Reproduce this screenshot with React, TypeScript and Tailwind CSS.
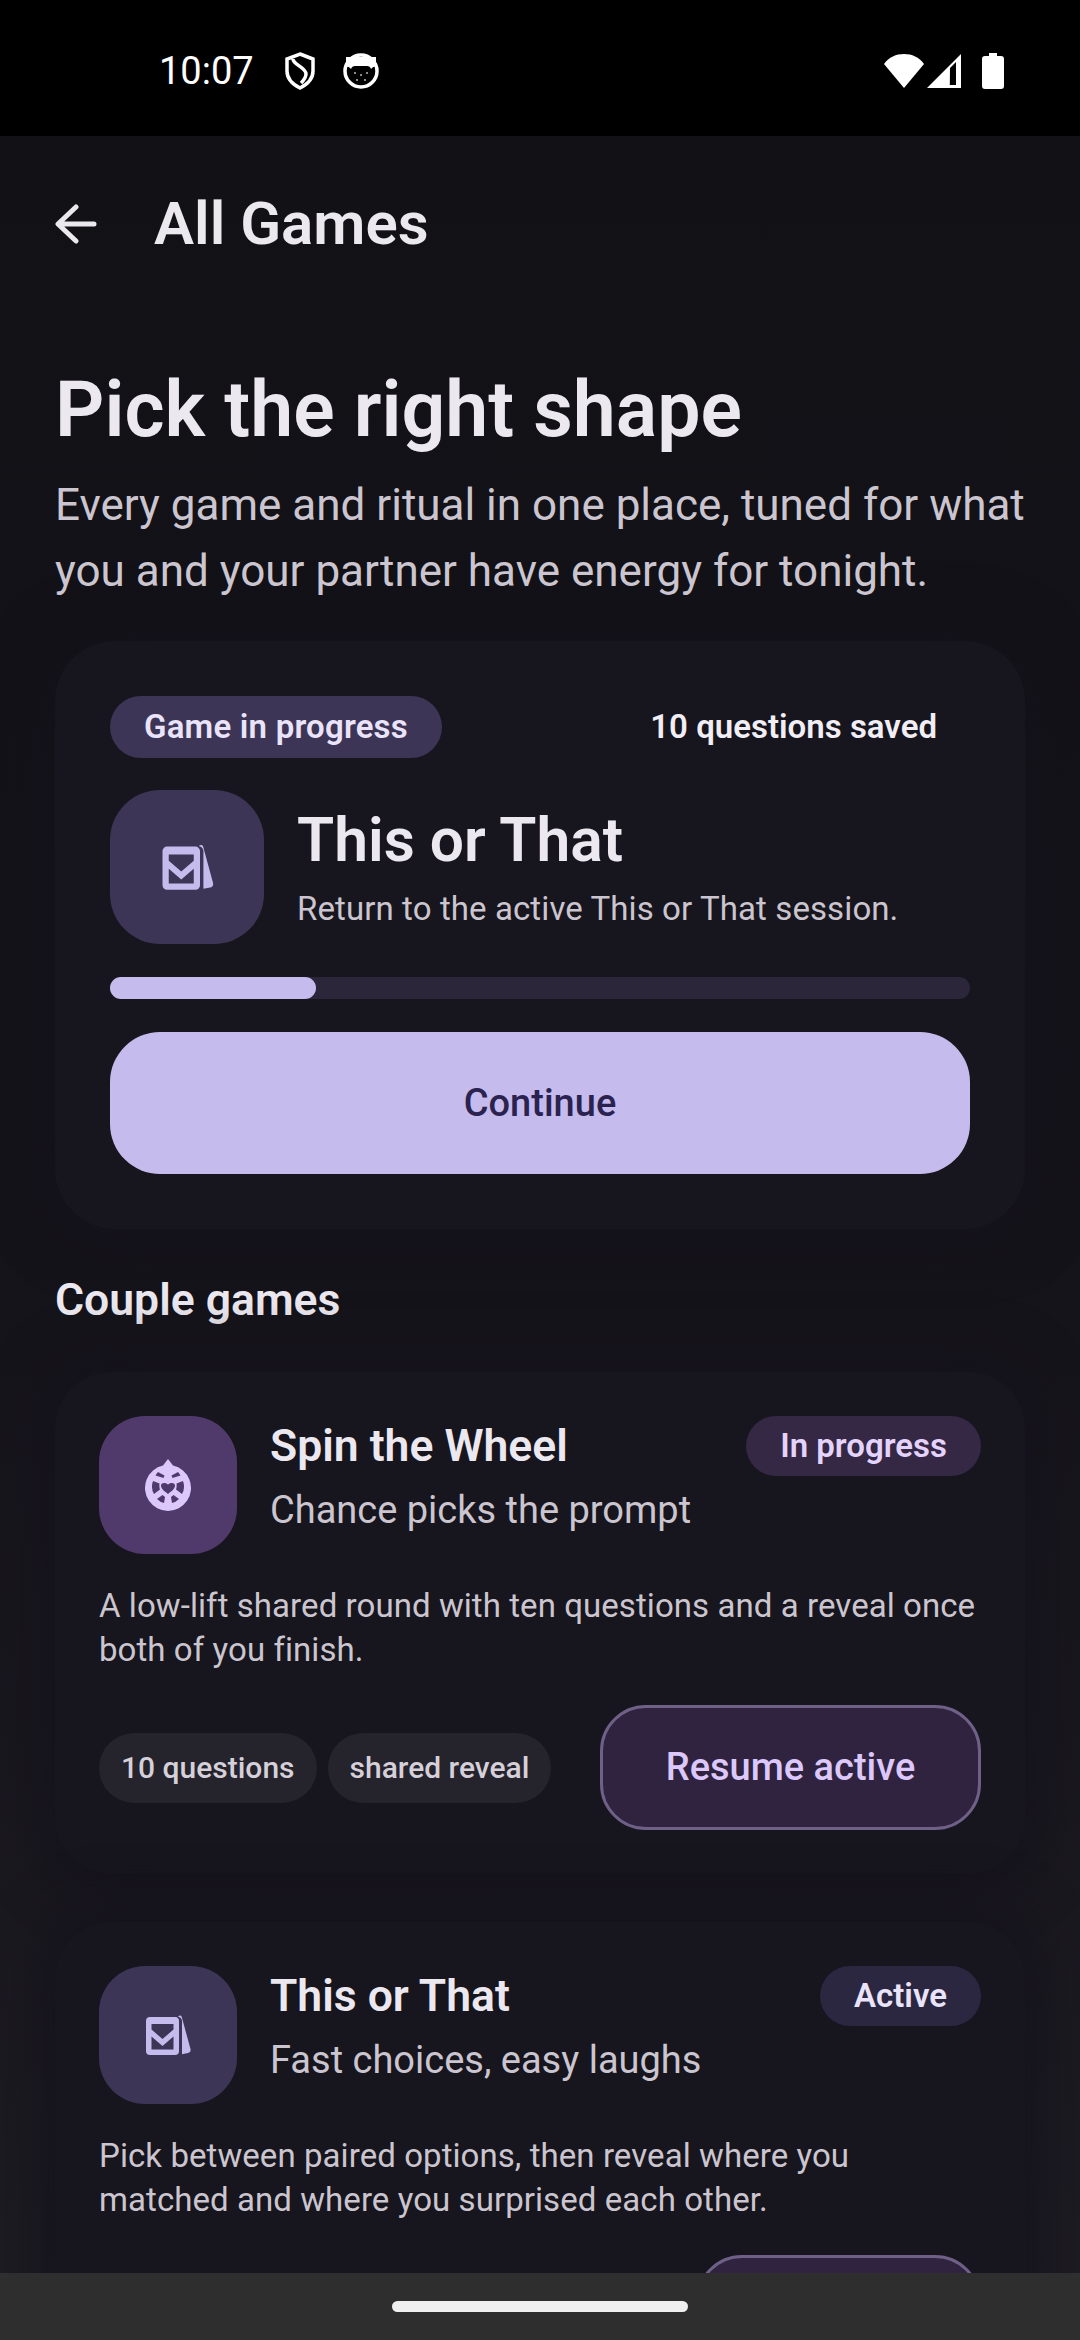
const CardsIcon = ({ className }: { className: string }) => (
  <svg viewBox="0 0 46 44" className={className}>
    <path d="M33 3.500c1.200-1.300 3-1.200 3.700.3L45.500 36c.5 2-.5 3.600-2.500 4l-6 1.200V8c0-2-1.500-3.700-4-4.500z" fill="currentColor" />
    <path fillRule="evenodd" d="M5 4h25a4 4 0 0 1 4 4v30a4 4 0 0 1-4 4H5a4 4 0 0 1-4-4V8a4 4 0 0 1 4-4zm1.500 7v5.500l11 9.500 11-9.500V11zm0 12.500v13h22v-13l-11 9.500z" fill="currentColor" />
  </svg>
);

const WheelIcon = ({ className }: { className: string }) => (
  <svg viewBox="0 0 46 52" className={className}>
    <path fillRule="evenodd" d="M23 0l5 6.500A23 23 0 1 1 18 6.500zM13 13l6.500 3.500-1 2.500-8-2.500q1-2 2.500-3.500zm20 0q1.500 1.500 2.500 3.500l-8 2.500-1-2.500zM8 22l6.500 2.500q-.5 3 .5 6L9 35q-3.500-6-1-13zm30 0q2.500 7-1 13l-6-4.500q1-3 .5-6zM23 35c-3-2.500-7-5-7-8.500 0-2 3-4 7-1 4-3 7-1 7 1 0 3.500-4 6-7 8.500zM12 40l5.500-4 2.500 2-1 6q-4-1-7-4zm22 0q-3 3-7 4l-1-6 2.500-2z" fill="currentColor" />
  </svg>
);

const StatusBar = () => (
  <div className="h-[136px] shrink-0 bg-black flex items-center pt-[6px] pl-[159px] pr-[76px] text-white">
    <span className="text-[38px] leading-none w-[95px]">10:07</span>
    <svg viewBox="0 0 32 38" className="w-[32px] h-[38px] ml-[30px]" fill="none" stroke="white" strokeWidth="3.500">
      <path d="M16 2l13 5v12c0 7-5 13-13 17C8 32 3 26 3 19V7zM9 7c0 6 13 8 13 15 0 3-2 6-5 9" />
    </svg>
    <svg viewBox="0 0 36 36" className="w-[36px] h-[36px] ml-[27px]">
      <circle cx="18" cy="18" r="16" fill="none" stroke="white" strokeWidth="3.500" />
      <path d="M3 14q2-1 4 1l1 1q1-3 4-3h12q3 0 4 3l1-1q2-2 4-1V4H3z" fill="white" />
      <g fill="#b5b5b5">
        <circle cx="12" cy="20" r="1" />
        <circle cx="18" cy="22" r="1" />
        <circle cx="24" cy="20" r="1" />
        <circle cx="14" cy="27" r="1" />
        <circle cx="22" cy="27" r="1" />
      </g>
    </svg>
    <div className="flex-1" />
    <svg viewBox="0 0 40 36" className="w-[40px] h-[36px]">
      <path d="M0 11C5 4 12 1 20 1s15 3 20 10L20 35z" fill="white" />
    </svg>
    <svg viewBox="0 0 36 36" className="w-[36px] h-[36px] ml-[2px]">
      <path fillRule="evenodd" d="M35 1v34H1zM24 15l-.2 17H30V9z" fill="white" />
    </svg>
    <svg viewBox="0 0 22 36" className="w-[22px] h-[36px] ml-[20px]">
      <path d="M7 0h8v3h4a3 3 0 0 1 3 3v27a3 3 0 0 1-3 3H3a3 3 0 0 1-3-3V6a3 3 0 0 1 3-3h4z" fill="white" />
    </svg>
  </div>
);

const Chip = ({ label }: { label: string }) => (
  <span className="h-[70px] px-[22px] flex items-center rounded-full bg-[#25232b] text-[30px] font-medium text-[#d5d0d9] whitespace-nowrap">
    {label}
  </span>
);

const GameCard = ({
  title,
  sub,
  desc,
  badge,
  action,
  actionWidth,
  icon,
  iconBg,
  badgeBg,
  badgeText,
  chips,
}: {
  title: string;
  sub: string;
  desc: string;
  badge: string;
  action?: string;
  actionWidth: string;
  icon: React.ReactNode;
  iconBg: string;
  badgeBg: string;
  badgeText: string;
  chips: string[];
}) => (
  <div className="rounded-[56px] bg-[#17151d] shadow-[0_0_50px_20px_rgba(20,18,26,0.8)] p-[44px] shrink-0">
    <div className="flex items-start">
      <div className={`w-[138px] h-[138px] rounded-[46px] flex items-center justify-center ${iconBg}`}>{icon}</div>
      <div className="flex-1 ml-[33px] min-w-0">
        <div className="font-semibold text-[44.5px] leading-[60px] text-[#ece8ef]">{title}</div>
        <div className="text-[38px] leading-[52px] mt-[8px] text-[#cbc5cf]">{sub}</div>
      </div>
      <span className={`h-[60px] px-[34px] rounded-full flex items-center font-semibold text-[33px] ${badgeBg} ${badgeText}`}>
        {badge}
      </span>
    </div>
    <p className="mt-[30px] text-[33px] leading-[44px] text-[#cbc5cf] tracking-[0.07px]">{desc}</p>
    <div className="mt-[33px] flex items-center">
      <div className="flex gap-[11px]">
        {chips.map((c) => (
          <Chip key={c} label={c} />
        ))}
      </div>
      <div className="flex-1" />
      <button className={`h-[125px] rounded-[46px] border-[3px] border-[#6f6087] bg-[#30233f] text-[#dcc8fb] font-medium text-[38px] ${actionWidth}`}>
        {action}
      </button>
    </div>
  </div>
);

export default function App() {
  return (
    <div className="w-[1080px] h-[2340px] flex flex-col overflow-hidden bg-[#121217] font-['Roboto',sans-serif]">
      <StatusBar />
      <div className="flex-1 min-h-0 overflow-hidden bg-gradient-to-b from-[#111116] via-[#15131a] to-[#1e1c23]">
        <div className="h-[176px] flex items-center pl-[55px]">
          <svg viewBox="0 0 42 40" className="w-[42px] h-[40px]" fill="none" stroke="#ece8ef" strokeWidth="5" strokeLinecap="round" strokeLinejoin="round">
            <path d="M21 3L3 20l18 17M4 20h35" />
          </svg>
          <h1 className="ml-[57px] font-semibold text-[60px] text-[#ece8ef]">All Games</h1>
        </div>
        <div className="px-[55px] pt-[50px]">
          <h2 className="font-semibold text-[77px] leading-[96px] text-[#ece8ef]">Pick the right shape</h2>
          <p className="mt-[14px] text-[44px] leading-[66px] text-[#cbc5cf]">
            Every game and ritual in one place, tuned for what you and your partner have energy for tonight.
          </p>

          <div className="mt-[37px] rounded-[60px] bg-[#17151d] shadow-[0_0_50px_20px_rgba(20,18,26,0.8)] p-[55px]">
            <div className="flex items-center justify-between">
              <span className="h-[62px] px-[34px] rounded-full bg-[#3d3556] flex items-center font-semibold text-[33px] tracking-[0.2px] text-[#eae4fb]">
                Game in progress
              </span>
              <span className="font-semibold text-[33px] text-[#f1eef5] mr-[33px]">10 questions saved</span>
            </div>
            <div className="mt-[32px] flex items-center">
              <div className="w-[154px] h-[154px] rounded-[50px] bg-[#3d3556] flex items-center justify-center">
                <CardsIcon className="w-[53px] h-[50px] text-[#c5bbec]" />
              </div>
              <div className="ml-[33px] pt-[4px]">
                <div className="font-semibold text-[60.5px] leading-[70px] text-[#ece8ef]">This or That</div>
                <div className="mt-[10px] text-[33px] leading-[46px] text-[#cbc5cf] tracking-[0.1px]">Return to the active This or That session.</div>
              </div>
            </div>
            <div className="mt-[33px] h-[22px] rounded-full bg-[#2b2639]">
              <div className="h-full w-[24%] rounded-full bg-[#c5bbec]" />
            </div>
            <button className="mt-[33px] w-full h-[142px] rounded-[50px] bg-[#c5bbec] font-medium text-[38px] text-[#2a2350]">
              Continue
            </button>
          </div>

          <h3 className="mt-[43px] font-semibold text-[44.5px] leading-[56px] text-[#ece8ef]">Couple games</h3>

          <div className="mt-[44px] flex flex-col gap-[48px]">
            <GameCard
              title="Spin the Wheel"
              sub="Chance picks the prompt"
              desc="A low-lift shared round with ten questions and a reveal once both of you finish."
              badge="In progress"
              action="Resume active"
              actionWidth="w-[381px]"
              iconBg="bg-[#4f3a6b]"
              badgeBg="bg-[#342844]"
              badgeText="text-[#e4d3fc]"
              icon={<WheelIcon className="w-[46px] h-[52px] text-[#dcc8fb]" />}
              chips={["10 questions", "shared reveal"]}
            />
            <GameCard
              title="This or That"
              sub="Fast choices, easy laughs"
              desc="Pick between paired options, then reveal where you matched and where you surprised each other."
              badge="Active"
              actionWidth="w-[285px]"
              iconBg="bg-[#3d3556]"
              badgeBg="bg-[#2b2741]"
              badgeText="text-[#eae4fb]"
              icon={<CardsIcon className="w-[46px] h-[44px] text-[#c5bbec]" />}
              chips={[]}
            />
          </div>
        </div>
      </div>
      <div className="h-[67px] shrink-0 bg-[#2e2e2e] flex items-center justify-center">
        <div className="w-[296px] h-[11px] rounded-full bg-[#f0f0f0]" />
      </div>
    </div>
  );
}
